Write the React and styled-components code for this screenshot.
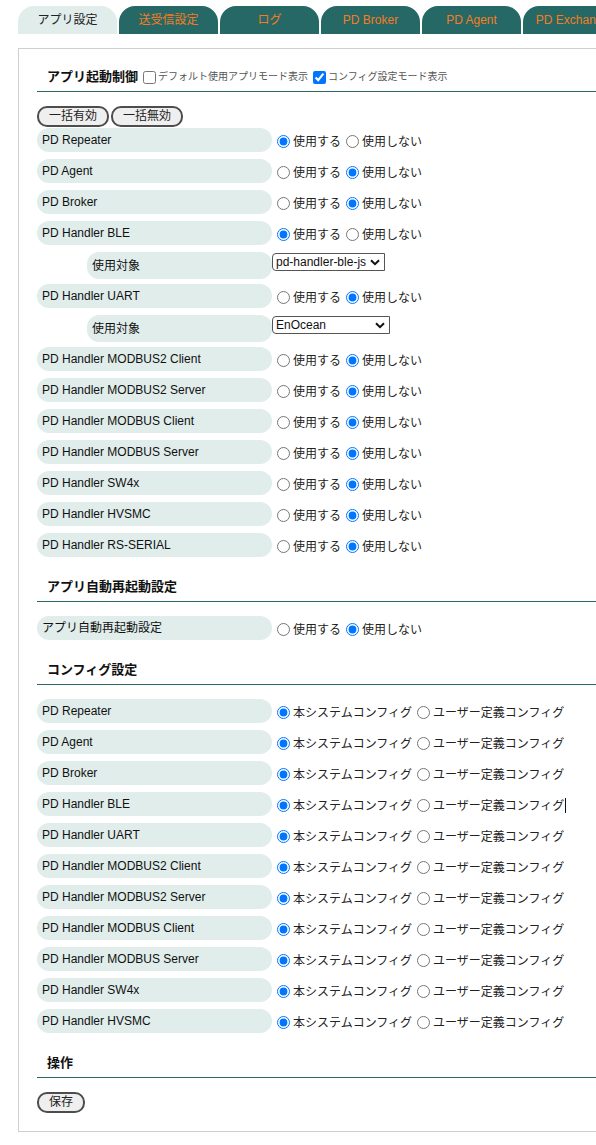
import React from 'react'
import styled, { createGlobalStyle } from 'styled-components'

const GlobalStyle = createGlobalStyle`
  html, body {
    margin: 0;
    overflow: hidden;
    background: #fff;
  }
  body {
    font-family: "Liberation Sans", "Noto Sans CJK JP", sans-serif;
    color: #222;
  }
  *, *::before, *::after {
    box-sizing: border-box;
  }
`

const Page = styled.div`
  padding: 6px 0 0 18px;
  width: 700px;
`

const TabBar = styled.div`
  display: flex;
  flex-wrap: nowrap;
  width: 578px;
  overflow: hidden;
`

const Tab = styled.div`
  flex: 0 0 99px;
  height: 28px;
  margin-right: 2px;
  border-radius: 16px 16px 0 0;
  background: ${p => (p.active ? '#e0edeb' : '#256865')};
  color: ${p => (p.active ? '#222' : '#f57c22')};
  font-size: 12px;
  line-height: 28px;
  text-align: center;
  white-space: nowrap;
  overflow: hidden;
`

const Panel = styled.div`
  margin-top: 14px;
  width: 640px;
  border: 1px solid #cfcfcf;
  padding: 20px 18px 18px 18px;
`

const Heading = styled.div`
  display: flex;
  align-items: center;
  height: 23px;
  margin-top: ${p => (p.first ? '0' : '22px')};
  margin-bottom: 14px;
  padding: 0 10px 6px 10px;
  border-bottom: 1px solid #2b6763;
  font-size: 13px;
  font-weight: bold;
  line-height: 16px;
  color: #111;
`

const HeadCheck = styled.label`
  display: flex;
  align-items: center;
  font-size: 10px;
  font-weight: normal;
  color: #555;
  margin-left: 5px;

  input {
    width: 13px;
    height: 13px;
    margin: 0 2px 0 0;
  }
`

const ButtonRow = styled.div`
  display: flex;
  gap: 2px;
  margin-bottom: 1px;
`

const PillButton = styled.button`
  height: 21px;
  padding: 0 10px;
  border: 2px solid #4d4d4d;
  border-radius: 10px;
  background: #efefef;
  font-family: inherit;
  font-size: 12px;
  line-height: 15px;
  color: #222;
`

const Row = styled.div`
  display: flex;
  align-items: flex-start;
  height: ${p => (p.sub ? '27px' : '24px')};
  margin-bottom: ${p => (p.sub ? '5px' : '7px')};
`

const Label = styled.div`
  flex: 0 0 auto;
  width: ${p => (p.sub ? '185px' : '235px')};
  margin-left: ${p => (p.sub ? '50px' : '0')};
  height: 100%;
  padding-left: 5px;
  border-radius: 12px;
  background: #e0edeb;
  display: flex;
  align-items: center;
  font-size: 12px;
  line-height: 14px;
  color: #111;
`

const Controls = styled.div`
  display: flex;
  align-items: center;
  height: ${p => (p.top ? '19px' : '24px')};
  padding-top: ${p => (p.top ? '1px' : '3px')};
  font-size: 12px;
  line-height: 14px;
  color: #222;
  white-space: nowrap;
`

const Choice = styled.label`
  display: flex;
  align-items: center;

  input {
    width: 13px;
    height: 13px;
    margin: 0 3px 0 5px;
  }
`

const SelectWrap = styled.div`
  position: relative;
  display: inline-flex;
`

const Select = styled.select`
  appearance: none;
  height: 18px;
  width: ${p => p.w}px;
  padding: 0 14px 0 3px;
  border: 1px solid #555;
  border-radius: 4px 0 0 4px;
  background: #fff;
  font-family: "Liberation Sans", sans-serif;
  font-size: 12px;
  line-height: 16px;
  color: #111;
`

const Chevron = styled.svg`
  position: absolute;
  right: 5px;
  top: 6px;
  pointer-events: none;
`

const Caret = styled.span`
  display: inline-block;
  width: 1px;
  height: 15px;
  margin-left: 1px;
  background: #111;
`

const appRows = [
  { name: 'PD Repeater', on: true },
  { name: 'PD Agent', on: false },
  { name: 'PD Broker', on: false },
  { name: 'PD Handler BLE', on: true, target: { value: 'pd-handler-ble-js', w: 113 } },
  { name: 'PD Handler UART', on: false, target: { value: 'EnOcean', w: 118 } },
  { name: 'PD Handler MODBUS2 Client', on: false },
  { name: 'PD Handler MODBUS2 Server', on: false },
  { name: 'PD Handler MODBUS Client', on: false },
  { name: 'PD Handler MODBUS Server', on: false },
  { name: 'PD Handler SW4x', on: false },
  { name: 'PD Handler HVSMC', on: false },
  { name: 'PD Handler RS-SERIAL', on: false }
]

const configRows = [
  'PD Repeater',
  'PD Agent',
  'PD Broker',
  'PD Handler BLE',
  'PD Handler UART',
  'PD Handler MODBUS2 Client',
  'PD Handler MODBUS2 Server',
  'PD Handler MODBUS Client',
  'PD Handler MODBUS Server',
  'PD Handler SW4x',
  'PD Handler HVSMC'
]

const tabs = ['アプリ設定', '送受信設定', 'ログ', 'PD Broker', 'PD Agent', 'PD Exchange']

function UseChoice ({ name, on }) {
  return (
    <Controls>
      <Choice>
        <input type='radio' name={name} defaultChecked={on} />
        使用する
      </Choice>
      <Choice>
        <input type='radio' name={name} defaultChecked={!on} />
        使用しない
      </Choice>
    </Controls>
  )
}

export default function App () {
  return (
    <Page>
      <GlobalStyle />
      <TabBar>
        {tabs.map((t, i) => (
          <Tab key={t} active={i === 0}>{t}</Tab>
        ))}
      </TabBar>
      <Panel>
        <Heading first>
          アプリ起動制御
          <HeadCheck>
            <input type='checkbox' />
            デフォルト使用アプリモード表示
          </HeadCheck>
          <HeadCheck>
            <input type='checkbox' defaultChecked />
            コンフィグ設定モード表示
          </HeadCheck>
        </Heading>
        <ButtonRow>
          <PillButton>一括有効</PillButton>
          <PillButton>一括無効</PillButton>
        </ButtonRow>
        {appRows.map(r => (
          <React.Fragment key={r.name}>
            <Row>
              <Label>{r.name}</Label>
              <UseChoice name={'use-' + r.name} on={r.on} />
            </Row>
            {r.target && (
              <Row sub>
                <Label sub>使用対象</Label>
                <Controls top>
                  <SelectWrap>
                    <Select w={r.target.w} defaultValue={r.target.value}>
                      <option>{r.target.value}</option>
                    </Select>
                    <Chevron width='10' height='7' viewBox='0 0 10 7'>
                      <path d='M1 1.2 L5 5.2 L9 1.2' fill='none' stroke='#111' strokeWidth='2' />
                    </Chevron>
                  </SelectWrap>
                </Controls>
              </Row>
            )}
          </React.Fragment>
        ))}

        <Heading>アプリ自動再起動設定</Heading>
        <Row>
          <Label>アプリ自動再起動設定</Label>
          <UseChoice name='auto-restart' on={false} />
        </Row>

        <Heading>コンフィグ設定</Heading>
        {configRows.map(name => (
          <Row key={name}>
            <Label>{name}</Label>
            <Controls>
              <Choice>
                <input type='radio' name={'cfg-' + name} defaultChecked />
                本システムコンフィグ
              </Choice>
              <Choice>
                <input type='radio' name={'cfg-' + name} />
                ユーザー定義コンフィグ
                {name === 'PD Handler BLE' && <Caret />}
              </Choice>
            </Controls>
          </Row>
        ))}

        <Heading>操作</Heading>
        <PillButton>保存</PillButton>
      </Panel>
    </Page>
  )
}
